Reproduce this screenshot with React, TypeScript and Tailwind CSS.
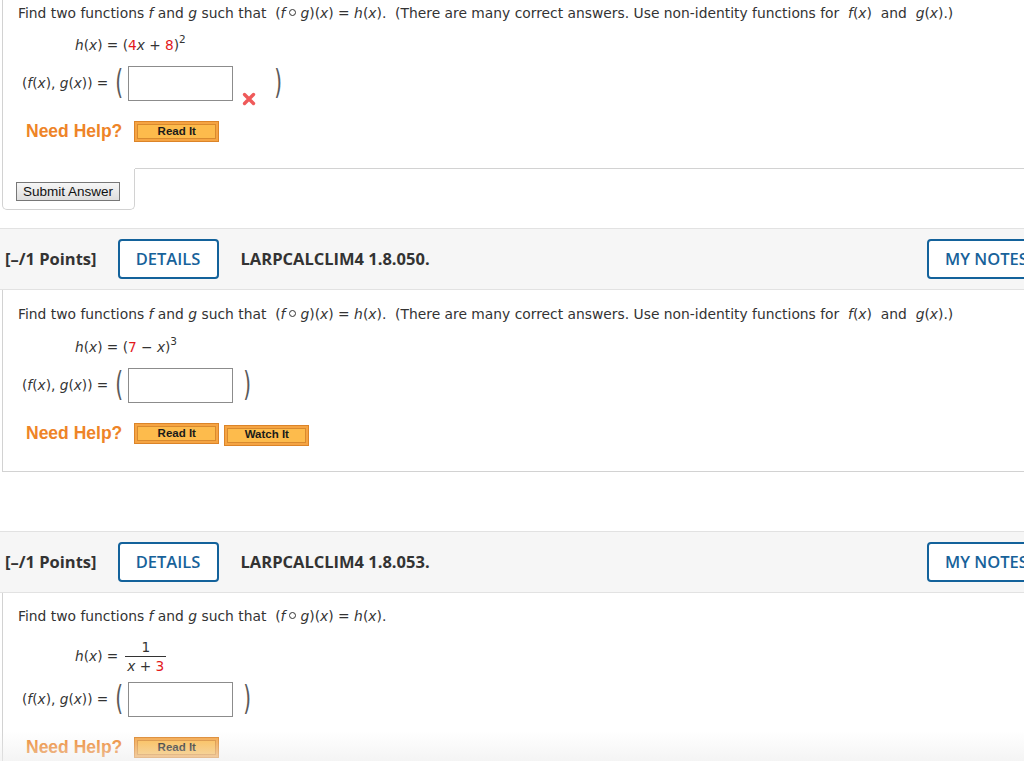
import React from 'react';

const BODY_FONT = { fontFamily: '"DejaVu Sans", Verdana, sans-serif' };

// ── Small math helpers ────────────────────────────────────────────────────
const V = ({ children }: { children: React.ReactNode }) => (
  <span className="italic">{children}</span>
);
const Red = ({ children }: { children: React.ReactNode }) => (
  <span className="text-[#e3191c]">{children}</span>
);
// composition ring
const Ring = () => (
  <span className="inline-block w-[7px] h-[7px] rounded-full border-[1.8px] border-[#333] mx-[4px] align-middle relative top-[-1px]" />
);

const Paren = ({ ch }: { ch: string }) => (
  <span className="inline-block text-[20px] leading-none text-[#5a5a5a] scale-y-[1.7] font-['DejaVu_Sans',sans-serif]">
    {ch}
  </span>
);

function Prompt({ extra }: { extra?: boolean }) {
  return (
    <div className="h-[24px] pt-[3px] flex items-center whitespace-pre text-[13.85px] text-[#333]">
      Find two functions <V>f</V> and <V>g</V> such that  (<V>f</V><Ring /><V>g</V>)(<V>x</V>) = <V>h</V>(<V>x</V>).
      {extra && (
        <>
          {'  '}(There are many correct answers. Use non-identity functions for  <V>f</V>(<V>x</V>)  and  <V>g</V>(<V>x</V>).)
        </>
      )}
    </div>
  );
}

function AnswerRow({ wrong }: { wrong?: boolean }) {
  return (
    <div className="flex items-center h-[35px] pl-[4px] text-[13.7px] text-[#333]">
      <span className="whitespace-pre">
        (<V>f</V>(<V>x</V>), <V>g</V>(<V>x</V>)) =
      </span>
      <span className="ml-[7px] mr-[5px]"><Paren ch="(" /></span>
      <div className="w-[105px] h-[35px] border border-[#8c8c8c] bg-white" />
      {wrong ? (
        <svg viewBox="0 0 14 14" className="w-[14px] h-[14px] ml-[9px] self-end mb-[-5px]">
          <path d="M2.5 2.5 L11.5 11.5 M11.5 2.5 L2.5 11.5" stroke="#ef5a5a" strokeWidth="3.4" strokeLinecap="round" />
        </svg>
      ) : null}
      <span className={wrong ? 'ml-[18px]' : 'ml-[10px]'}><Paren ch=")" /></span>
    </div>
  );
}

function OrangeBtn({ label }: { label: string }) {
  return (
    <button className="w-[85px] h-[21px] p-[2px] bg-[#f5a443] border border-[#dc8428]">
      <span className="flex items-center justify-center w-full h-full bg-[#fdbb4c] border border-[#d98a2e] text-[11.5px] font-bold text-[#1a1a1a] font-['Liberation_Sans',sans-serif]">
        {label}
      </span>
    </button>
  );
}

function NeedHelp({ watch }: { watch?: boolean }) {
  return (
    <div className="flex items-center h-[21px] pl-[8px]">
      <span className="text-[17.5px] font-bold text-[#ee8428] font-['Liberation_Sans',sans-serif] mr-[12px]">
        Need Help?
      </span>
      <OrangeBtn label="Read It" />
      {watch && <span className="ml-[5px]"><OrangeBtn label="Watch It" /></span>}
    </div>
  );
}

function Header({ code }: { code: string }) {
  return (
    <div className="h-[62px] flex items-center bg-[#f6f6f6] border-t border-b border-[#e2e2e2] pl-[5px] pr-[2px] font-['Open_Sans',sans-serif]">
      <span className="text-[16.5px] font-bold text-[#333]">[–/1 Points]</span>
      <button className="ml-[21px] h-[40px] w-[101px] border-2 border-[#13629b] rounded-[4px] text-[16.5px] font-semibold text-[#17629a] bg-white">
        DETAILS
      </button>
      <span className="ml-[22px] text-[16.5px] font-bold text-[#333]">{code}</span>
      <button className="ml-auto h-[40px] w-[116px] border-2 border-[#13629b] rounded-[4px] text-[16.5px] font-semibold text-[#17629a] bg-white text-left pl-[16px] whitespace-nowrap">
        MY NOTES
      </button>
    </div>
  );
}

export default function App() {
  return (
    <div className="relative w-[1024px] h-[761px] overflow-hidden bg-white" style={BODY_FONT}>
      <div className="w-[1045px]">

        {/* ── Question 1 (scrolled) ── */}
        <div className="ml-[2px] border-l border-[#d2d2d2] pl-[15px] pb-[27px]">
          <Prompt extra />
          <div className="mt-[9px] pl-[57px] h-[24px] flex items-center text-[13.7px] text-[#333] whitespace-pre">
            <V>h</V>(<V>x</V>) = (<Red>4</Red><V>x</V> + <Red>8</Red>)<sup className="text-[10.5px] relative top-[-6px]">2</sup>
          </div>
          <div className="mt-[9px]"><AnswerRow wrong /></div>
          <div className="mt-[20px]"><NeedHelp /></div>
        </div>
        <div className="flex ml-[2px]">
          <div className="w-[133px] h-[41px] flex items-start border border-t-0 border-[#d2d2d2] rounded-b-[5px] pl-[13px] pt-[13px]">
            <button className="h-[19px] px-[6px] border border-[#777] bg-linear-to-b from-[#f6f6f6] to-[#dedede] text-[13.5px] text-[#111] leading-none font-['Liberation_Sans',sans-serif]">
              Submit Answer
            </button>
          </div>
          <div className="flex-1 border-t border-[#d2d2d2] mt-[-1px]" />
        </div>

        {/* ── Question 2 ── */}
        <div className="mt-[18px]">
          <Header code="LARPCALCLIM4 1.8.050." />
          <div className="ml-[2px] border-l border-b border-[#d2d2d2] pl-[15px] pt-[11px] pb-[27px]">
            <Prompt extra />
            <div className="mt-[10px] pl-[57px] h-[24px] flex items-center text-[13.7px] text-[#333] whitespace-pre">
              <V>h</V>(<V>x</V>) = (<Red>7</Red> − <V>x</V>)<sup className="text-[10.5px] relative top-[-6px]">3</sup>
            </div>
            <div className="mt-[9px]"><AnswerRow /></div>
            <div className="mt-[20px]"><NeedHelp watch /></div>
          </div>
        </div>

        {/* ── Question 3 ── */}
        <div className="mt-[59px]">
          <Header code="LARPCALCLIM4 1.8.053." />
          <div className="ml-[2px] border-l border-[#d2d2d2] pl-[15px] pt-[10px] pb-[27px]">
            <Prompt />
            <div className="mt-[11px] pl-[57px] flex items-center text-[13.7px] text-[#333]">
              <span className="whitespace-pre">
                <V>h</V>(<V>x</V>) =
              </span>
              <span className="ml-[7px] inline-flex flex-col items-center leading-[18px]">
                <span>1</span>
                <span className="border-t border-[#333] px-[2px] whitespace-pre">
                  <V>x</V> + <Red>3</Red>
                </span>
              </span>
            </div>
            <div className="mt-[7px]"><AnswerRow /></div>
            <div className="mt-[20px]"><NeedHelp /></div>
          </div>
        </div>
      </div>

      {/* bottom fade */}
      <div className="pointer-events-none absolute bottom-0 inset-x-0 h-[30px] bg-linear-to-b from-white/0 to-[#ededed]/60" />
    </div>
  );
}
